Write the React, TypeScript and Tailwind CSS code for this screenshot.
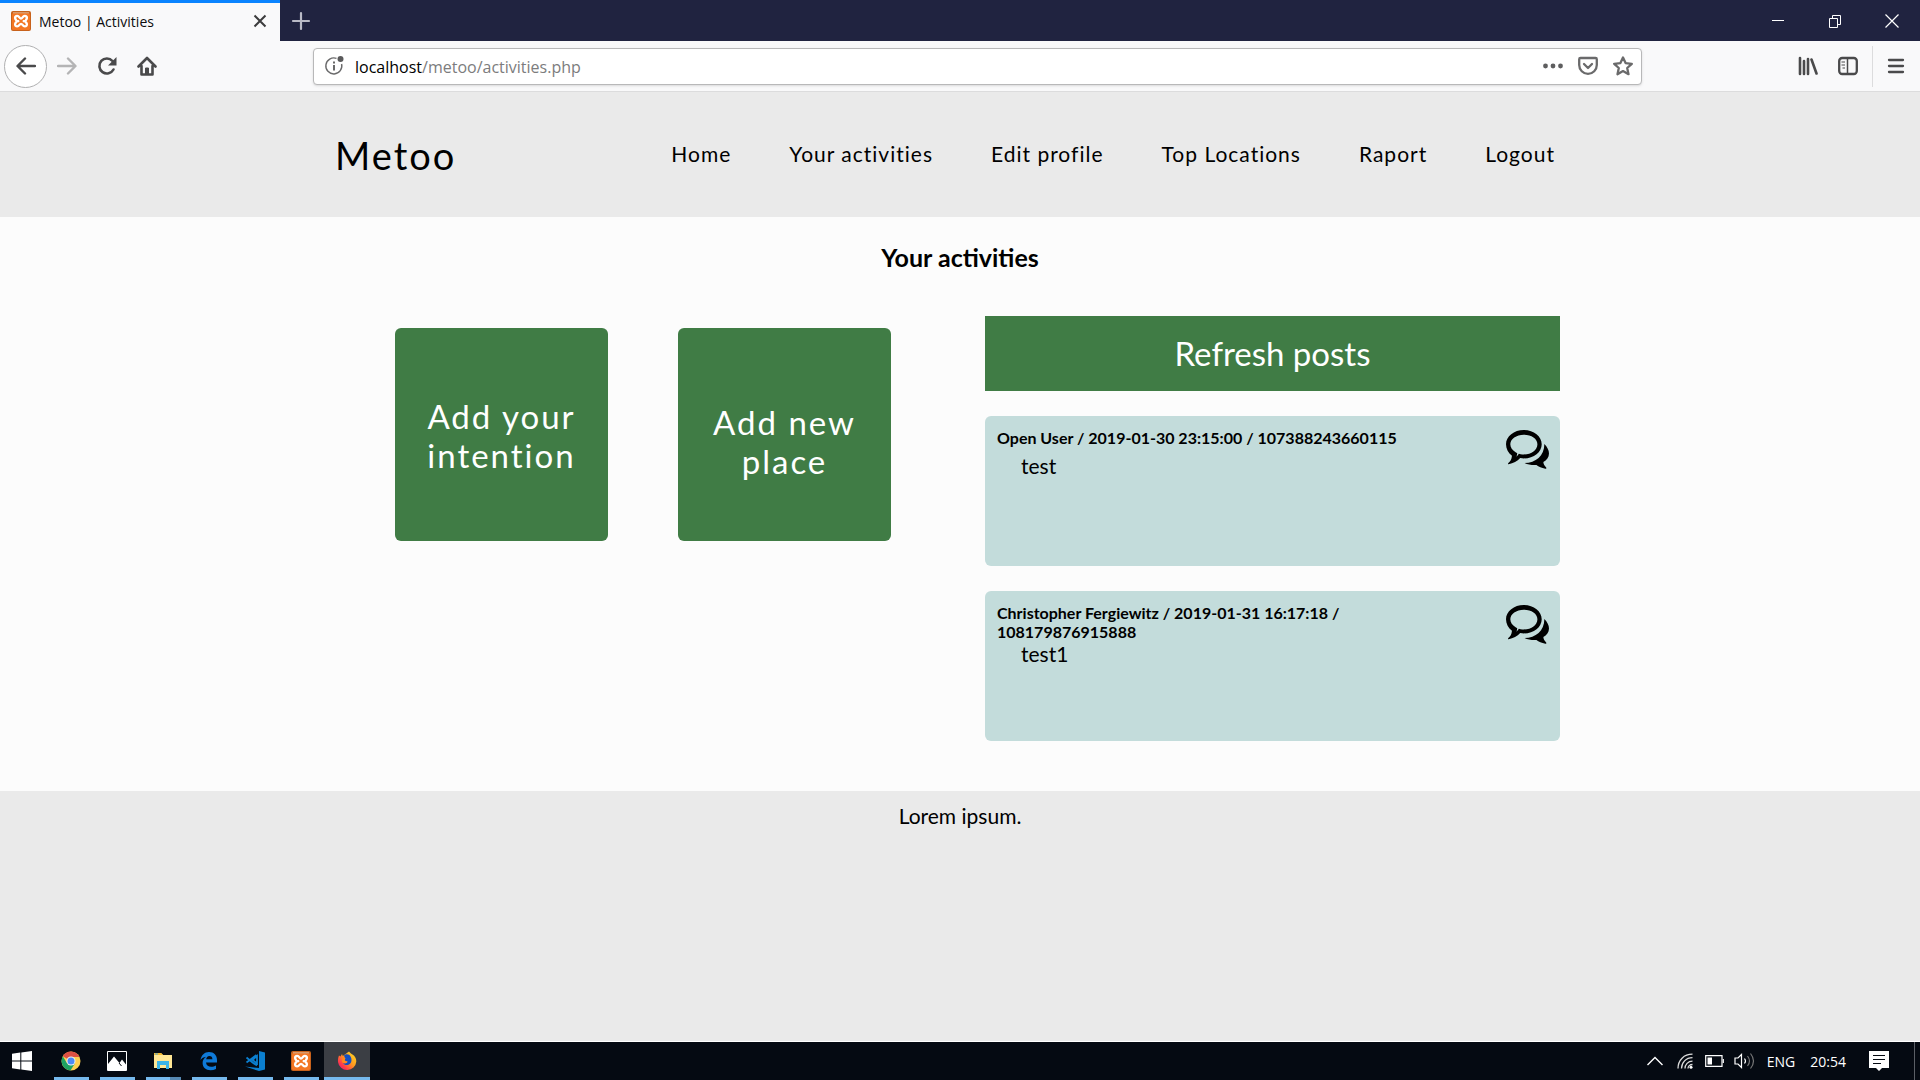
import React from "react";

function Xampp({ className }: { className: string }) {
  return (
    <svg viewBox="0 0 20 20" className={className} aria-hidden="true">
      <rect width="20" height="20" rx="2" fill="#c8621c" />
      <rect x="1" y="2" width="18" height="17" rx="1.5" fill="#f37623" />
      <path d="M2 1h16v1.5H2z" fill="#d99a6c" />
      <path
        d="M7.300 10.200C3.200 9 3.200 5 6.200 5 8.500 5 8.300 7.600 10 7.600S11.500 5 13.800 5c3 0 3 4-1.100 5.200 4.100 1.200 4.100 5.200 1.100 5.200-2.300 0-2.100-2.600-3.800-2.600s-1.500 2.600-3.800 2.600c-3 0-3-4 1.100-5.200z"
        fill="none"
        stroke="#fff"
        strokeWidth="2.3"
        strokeLinejoin="round"
      />
      <path d="M6.500 6.500v2.300M13.500 6.500v2.300M6.500 11.700v2.300M13.500 11.700v2.300" stroke="#f37623" strokeWidth="1" />
    </svg>
  );
}

function CommentsIcon() {
  return (
    <svg viewBox="0 0 130 118" className="h-[39px] w-[43px]" aria-hidden="true">
      <path
        fillRule="evenodd"
        d="M54 0C84 0 108 19 108 43S84 86 54 86q-5 0-11-1C34 95 22 101 8 104q-3-1-1-4c6-5 10-11 11-22C7 69 0 57 0 43 0 19 24 0 54 0zM54 14C31 14 13 27 13 43c0 10 6 18 16 24l5 3-2 11 7-9 5 1q5 1 10 1c23 0 41-14 41-31S77 14 54 14z"
      />
      <path d="M116 42c9 9 14 19 14 29 0 12-7 20-17 26 0 7 4 12 9 17q1 4-3 3c-11-2-20-5-27-11-13 1-25-1-36-6 34-1 60-22 60-58z" />
    </svg>
  );
}

function TabStrip() {
  return (
    <div className="flex h-[41px] bg-[#202340]">
      <div className="flex w-[280px] items-center border-t-[3px] border-[#0a84ff] bg-[#f9f9fa] pr-[10px] pb-0.5 pl-[11px]">
        <Xampp className="h-5 w-5" />
        <span className="ml-2 flex-1 font-['Open_Sans',sans-serif] text-[14px] text-[#0c0c0d]">Metoo | Activities</span>
        <button aria-label="Close tab" className="flex h-5 w-5 items-center justify-center">
          <svg viewBox="0 0 20 20" className="h-5 w-5" stroke="#3c3c3d" strokeWidth="2">
            <path d="M4.500 4.500l11 11M15.500 4.500l-11 11" />
          </svg>
        </button>
      </div>
      <button aria-label="New tab" className="flex w-[42px] items-center justify-center">
        <svg viewBox="0 0 20 20" className="h-5 w-5" stroke="#b9bac6" strokeWidth="2.200" strokeLinecap="round">
          <path d="M10 2v16M2 10h16" />
        </svg>
      </button>
      <div className="flex-1" />
      <button aria-label="Minimize" className="flex w-[57px] items-center justify-center">
        <svg viewBox="0 0 14 14" className="h-[14px] w-[14px]" stroke="#fff">
          <path d="M1 6.500h12" />
        </svg>
      </button>
      <button aria-label="Restore" className="flex w-[57px] items-center justify-center">
        <svg viewBox="0 0 14 14" className="h-[14px] w-[14px]" stroke="#fff" fill="none">
          <path d="M1.500 4.500h8v9h-8zM4.500 4.500v-3h8v9h-3" />
        </svg>
      </button>
      <button aria-label="Close window" className="flex w-[57px] items-center justify-center">
        <svg viewBox="0 0 14 14" className="h-[14px] w-[14px]" stroke="#fff" strokeWidth="1.200">
          <path d="M.5.5l13 13M13.500.5l-13 13" />
        </svg>
      </button>
    </div>
  );
}

function Toolbar() {
  return (
    <div className="flex h-[51px] items-center border-b border-[#dcdcdd] bg-[#f9f9fa] pr-[14px] pl-1">
      <button aria-label="Back" className="flex h-[43px] w-[43px] items-center justify-center rounded-full border border-[#b0b0b1] bg-white">
        <svg viewBox="0 0 20 20" className="h-5 w-5" fill="none" stroke="#4a4a4b" strokeWidth="2.400" strokeLinecap="round" strokeLinejoin="round">
          <path d="M19 10H2M9 2.500L1.500 10 9 17.500" />
        </svg>
      </button>
      <button aria-label="Forward" className="flex w-10 items-center justify-center">
        <svg viewBox="0 0 20 20" className="h-5 w-5" fill="none" stroke="#b4b4b5" strokeWidth="2.400" strokeLinecap="round" strokeLinejoin="round">
          <path d="M1 10h17M11 2.500l7.500 7.500-7.500 7.500" />
        </svg>
      </button>
      <button aria-label="Reload" className="flex w-10 items-center justify-center">
        <svg viewBox="0 0 20 20" className="h-5 w-5" fill="none" stroke="#4a4a4b" strokeWidth="2.600" strokeLinecap="round">
          <path d="M16.500 13.500A7.500 7.500 0 1 1 15.500 5" />
          <path d="M19.500 1v8.500H11z" fill="#4a4a4b" stroke="none" />
        </svg>
      </button>
      <button aria-label="Home page" className="flex w-10 items-center justify-center">
        <svg viewBox="0 0 20 20" className="h-5 w-5" fill="none" stroke="#4a4a4b" strokeWidth="2.600" strokeLinecap="round" strokeLinejoin="round">
          <path d="M1.500 10.500L10 2l8.500 8.500M4.500 10v8.500h11V10" />
          <path d="M8.500 18v-6h3v6z" fill="#4a4a4b" strokeWidth="1" />
        </svg>
      </button>
      <div className="mr-[146px] ml-[146px] flex h-[37px] flex-1 items-center rounded-sm border border-[#b8b8b9] bg-white pr-2 pl-[10px] shadow-sm">
        <svg viewBox="0 0 20 20" className="h-5 w-5 shrink-0" fill="none" stroke="#6a6a6b" strokeWidth="1.400">
          <path d="M12.500 2.400A8 8 0 1 0 17.600 8" />
          <path d="M10 9v5.500M10 5.500v2" strokeWidth="2" />
          <circle cx="16.500" cy="3" r="3" fill="#5a5a5b" stroke="none" />
        </svg>
        <div className="relative ml-[11px] h-full flex-1 font-['Open_Sans',sans-serif] text-[16px]">
          <div aria-hidden="true" className="pointer-events-none absolute inset-0 flex items-center pt-0.5 text-[#7c7c7d]">
            <span className="text-black">localhost</span>/metoo/activities.php
          </div>
          <input aria-label="Address" defaultValue="localhost/metoo/activities.php" className="h-full w-full bg-transparent pt-0.5 text-transparent outline-none" />
        </div>
        <button aria-label="Page actions">
          <svg viewBox="0 0 20 20" className="h-5 w-5" fill="#5e5e5f">
            <circle cx="2.500" cy="10" r="2.400" />
            <circle cx="10" cy="10" r="2.400" />
            <circle cx="17.500" cy="10" r="2.400" />
          </svg>
        </button>
        <button aria-label="Save to Pocket" className="ml-[15px]">
          <svg viewBox="0 0 20 20" className="h-5 w-5" fill="none" stroke="#6a6a6b" strokeWidth="2.300" strokeLinecap="round" strokeLinejoin="round">
            <path d="M2.500 2h15q1.300 0 1.300 1.300V9a8.800 8.800 0 0 1-17.600 0V3.300Q1.200 2 2.500 2z" />
            <path d="M6 8l4 4 4-4" />
          </svg>
        </button>
        <button aria-label="Bookmark" className="ml-[15px]">
          <svg viewBox="0 0 20 20" className="h-5 w-5" fill="none" stroke="#6a6a6b" strokeWidth="2.300" strokeLinejoin="round">
            <path d="M10 1.500l2.600 5.600 6.200.7-4.600 4.200 1.300 6.200L10 15.100l-5.500 3.100 1.300-6.200L1.200 7.800l6.200-.7z" />
          </svg>
        </button>
      </div>
      <button aria-label="Library" className="ml-[10px]">
        <svg viewBox="0 0 20 20" className="h-5 w-5" stroke="#4a4a4b" strokeWidth="2.600" strokeLinecap="round">
          <path d="M2 2v16M6 5v13M10 3v15M13.500 3.500L18.500 17.500" />
        </svg>
      </button>
      <button aria-label="Sidebars" className="ml-5">
        <svg viewBox="0 0 20 20" className="h-5 w-5" fill="none" stroke="#4a4a4b" strokeWidth="2.300">
          <rect x="1.200" y="2" width="17.600" height="16" rx="3" />
          <path d="M9.500 2v16" strokeWidth="1.500" />
          <path d="M3.500 6H7M3.500 9H7M4.500 12H7" strokeWidth="1.200" />
        </svg>
      </button>
      <div className="mr-[13px] ml-[14px] h-[41px] w-px bg-[#dcdcdd]" />
      <button aria-label="Open menu">
        <svg viewBox="0 0 20 20" className="h-5 w-5" stroke="#4a4a4b" strokeWidth="2.300" strokeLinecap="round">
          <path d="M3 4h14M3 10h14M3 16h14" />
        </svg>
      </button>
    </div>
  );
}

const links = ["Home", "Your activities", "Edit profile", "Top Locations", "Raport", "Logout"];

const posts = [
  { head: "Open User / 2019-01-30 23:15:00 / 107388243660115", body: "test" },
  { head: "Christopher Fergiewitz / 2019-01-31 16:17:18 / 108179876915888", body: "test1" },
];

function Page() {
  return (
    <div className="flex flex-1 flex-col bg-[#fcfcfc] font-['Lato',sans-serif] text-black">
      <header className="bg-[#eaeaea]">
        <div className="mx-auto flex h-[125px] max-w-[1250px] items-center justify-between pr-[30px]">
          <a href="#" className="pt-0.5 text-[38px] tracking-[2px]">Metoo</a>
          <nav className="flex gap-[58px] pb-0.5 text-[21px] tracking-[1px]">
            {links.map((l) => (
              <a key={l} href="#">{l}</a>
            ))}
          </nav>
        </div>
      </header>
      <main className="mx-auto w-full max-w-[1250px] pb-[50px]">
        <h1 className="pt-[25px] text-center text-[25px] leading-[31px] font-bold">Your activities</h1>
        <div className="mt-[43px] grid grid-cols-2">
          <section className="flex items-start gap-[70px] pt-3 pl-[60px] text-[33px] leading-[39px] tracking-[2px] text-white">
            <button className="h-[213px] w-[213px] rounded-md bg-[#407c45] px-4 pt-0.5">Add your intention</button>
            <button className="h-[213px] w-[213px] rounded-md bg-[#407c45] px-4 pt-3.5">Add new place</button>
          </section>
          <section className="px-[25px]">
            <button className="h-[75px] w-full bg-[#407c45] text-[33px] text-white">Refresh posts</button>
            {posts.map((p) => (
              <article key={p.body} className="mt-[25px] flex h-[150px] items-start justify-between rounded-md bg-[#c3dcdb] pt-3 pr-[11px] pl-3">
                <div>
                  <h2 className="min-h-[25px] max-w-[400px] text-[16px] leading-[19px] font-bold">{p.head}</h2>
                  <p className="pl-6 text-[21px] leading-[25px]">{p.body}</p>
                </div>
                <button aria-label="Comments" className="pt-0.5">
                  <CommentsIcon />
                </button>
              </article>
            ))}
          </section>
        </div>
      </main>
      <footer className="flex-1 bg-[#eaeaea] pt-3 text-center text-[21px] leading-[25px]">Lorem ipsum.</footer>
    </div>
  );
}

const apps = [
  {
    name: "Chrome",
    icon: (
      <svg viewBox="0 0 20 20" className="h-5 w-5">
        <circle cx="10" cy="10" r="9.500" fill="#fdd04f" />
        <path d="M10 10L1.800 5.200A9.500 9.500 0 0 1 18.500 6H10z" fill="#dd5144" />
        <path d="M10 10l4 2.300-4.500 7.200A9.500 9.500 0 0 1 1.800 5.200l4.200 7z" fill="#1ea362" />
        <circle cx="10" cy="10" r="4.500" fill="#f1f1f1" />
        <circle cx="10" cy="10" r="3.500" fill="#4c8bf5" />
      </svg>
    ),
  },
  {
    name: "Photos",
    icon: (
      <svg viewBox="0 0 20 20" className="h-5 w-5">
        <path d="M.5.500h19v19H.5z" fill="none" stroke="#fff" />
        <path d="M1 13l6-7.500 5.500 6.500 2.500-3.500 4 5V19H1z" fill="#fff" />
        <path d="M12 12l2.500 3" stroke="#050a12" />
      </svg>
    ),
  },
  {
    name: "File Explorer",
    icon: (
      <svg viewBox="0 0 20 20" className="h-5 w-5">
        <path d="M1 2h7l2 2h9v13H1z" fill="#ffe694" />
        <path d="M1 2h7l2 2H1z" fill="#f5b92e" />
        <path d="M2 2.500h3v1H2z" fill="#3fa9e0" />
        <path d="M4 18v-8h12v8h-3v-4H7v4z" fill="#3cb4e7" />
      </svg>
    ),
  },
  {
    name: "Edge",
    icon: (
      <svg viewBox="0 0 20 20" className="h-5 w-5">
        <path
          d="M1.500 9C2.300 4 5.500 1 10 1c5 0 8 3.400 8 8v2.500H7c.3 3 2.600 4.300 5.200 4.300 1.800 0 3.300-.5 4.800-1.400v3.700c-1.700.8-3.500 1.200-5.500 1.200-4.700 0-7.900-2.800-7.900-7.200 0-2.700 1.300-5 3.500-6.300C4.500 6.300 2.800 7.200 1.500 9zM7.200 8.300h6.200c0-2-1.100-3.200-3-3.200S7.400 6.400 7.200 8.300z"
          fill="#0f7ad8"
        />
      </svg>
    ),
  },
  {
    name: "Visual Studio Code",
    icon: (
      <svg viewBox="0 0 20 20" className="h-5 w-5">
        <path d="M14 0l6 1.500v17L14 20 0 15.500l14 1.500z" fill="#0b7fd0" />
        <path d="M12 5v7.500L7.500 9zM1.500 6.500l6 5 4.500 3M1.500 11.500L11.500 4" fill="none" stroke="#0b7fd0" strokeWidth="1.800" />
      </svg>
    ),
  },
  { name: "XAMPP", icon: <Xampp className="h-5 w-5" /> },
  {
    name: "Firefox",
    icon: (
      <svg viewBox="0 0 20 20" className="h-5 w-5">
        <defs>
          <linearGradient id="fox" x1="1" y1="0" x2="0" y2="1">
            <stop offset="0" stopColor="#ffe226" />
            <stop offset=".45" stopColor="#ff9a1f" />
            <stop offset=".75" stopColor="#ff3a4a" />
            <stop offset="1" stopColor="#d8168a" />
          </linearGradient>
        </defs>
        <path d="M2 4.500l1.500 1L5 3l.8 2L12 .5c1 1.200 1.600 2 3.500 3C18 5 19.300 7.500 19.300 10.500A9.200 9.200 0 0 1 1 11C.8 8.500 1.200 6.500 2 4.500z" fill="url(#fox)" />
        <path d="M7 4.500c2-2.200 5.500-1.500 6.500 1 1.500 2.500 1.500 6.500-1.500 8-2.500 1.300-5 .3-6-1.500 2 .8 3.500 0 4.500-1.300L7.500 9.500 8 7.300z" fill="#144fc0" />
        <path d="M5.500 6.500l3 .5-.8 2.500 3 1.200C9 13 6.500 12.500 5 11z" fill="#ff8a1c" />
      </svg>
    ),
  },
];

function Taskbar() {
  return (
    <footer className="flex h-[39px] items-stretch border-t border-white bg-[#050a12] font-['Open_Sans',sans-serif] text-white">
      <button aria-label="Start" className="mr-1 flex w-11 items-center justify-center">
        <svg viewBox="0 0 20 20" className="h-5 w-5" fill="#fff">
          <path d="M0 2.800L8.300 1.600v7.900H0zM9.300 1.500L20 0v9.500H9.300zM0 10.500h8.300v7.900L0 17.200zM9.300 10.500H20V20L9.300 18.500z" />
        </svg>
      </button>
      {apps.map((a) => (
        <button
          key={a.name}
          aria-label={a.name}
          className={a.name === "Firefox" ? "flex w-[46px] flex-col items-center bg-[#3b3e44]" : "flex w-[46px] flex-col items-center"}
        >
          <span className="flex flex-1 items-center pt-[3px]">{a.icon}</span>
          <span className={a.name === "Firefox" ? "h-[3px] w-full bg-[#76b9ed]" : "flex h-[3px] w-[35px] justify-end bg-[#76b9ed]"}>
            {a.name === "File Explorer" && <span className="w-[11px] bg-[#5789b3]" />}
          </span>
        </button>
      ))}
      <div className="ml-auto flex items-center">
        <button aria-label="Show hidden icons">
          <svg viewBox="0 0 16 16" className="h-4 w-4" fill="none" stroke="#fff" strokeWidth="1.400">
            <path d="M.5 12L8 4.500l7.500 7.500" />
          </svg>
        </button>
        <button aria-label="Network" className="ml-[14px]">
          <svg viewBox="0 0 16 16" className="h-4 w-4" fill="none" stroke="#dcdcdc" strokeWidth="1.300">
            <path d="M1 15.500C1 7 7 1.200 15.500 1.200M4.500 15.500C4.500 9.500 9 4.700 15.500 4.700M8 15.500c0-4 3-7.300 7.500-7.300M11 15.500c0-2 1.800-4 4.500-4" />
            <circle cx="14" cy="14.300" r="1.500" fill="#fff" stroke="none" />
          </svg>
        </button>
        <button aria-label="Battery" className="ml-3">
          <svg viewBox="0 0 19 12" className="h-3 w-[19px]" fill="none" stroke="#fff" strokeWidth="1.200">
            <path d="M.7.700h16.300v10.600H.7z" />
            <path d="M18.300 4v4" />
            <path d="M2.500 2.500H7v7H2.500z" fill="#fff" stroke="none" />
          </svg>
        </button>
        <button aria-label="Volume" className="ml-[10px]">
          <svg viewBox="0 0 21 18" className="h-[18px] w-[21px]" fill="none" stroke="#fff" strokeWidth="1.200">
            <path d="M1 6h3l3.500-3.500v13L4 12H1z" />
            <path d="M10.500 6.500q2 2.500 0 5" />
            <path d="M13.500 4q4 5 0 10M16.500 1.500q6 7.500 0 15" stroke="#777" />
          </svg>
        </button>
        <button className="ml-3 text-[14px]">ENG</button>
        <button className="ml-[15px] text-[14px]">20:54</button>
        <button aria-label="Notifications" className="ml-[23px]">
          <svg viewBox="0 0 20 20" className="h-5 w-5">
            <path d="M0 0h20v17h-7l-3 3-3-3H0z" fill="#fff" />
            <path d="M4 4.500h12M4 8.500h12M4 12.500h8" stroke="#050a12" strokeWidth="1.200" />
          </svg>
        </button>
        <div className="mr-[5px] ml-[25px] h-[38px] w-px bg-[#5b5f66]" />
      </div>
    </footer>
  );
}

export default function App() {
  return (
    <div className="flex min-h-screen flex-col">
      <TabStrip />
      <Toolbar />
      <Page />
      <Taskbar />
    </div>
  );
}
